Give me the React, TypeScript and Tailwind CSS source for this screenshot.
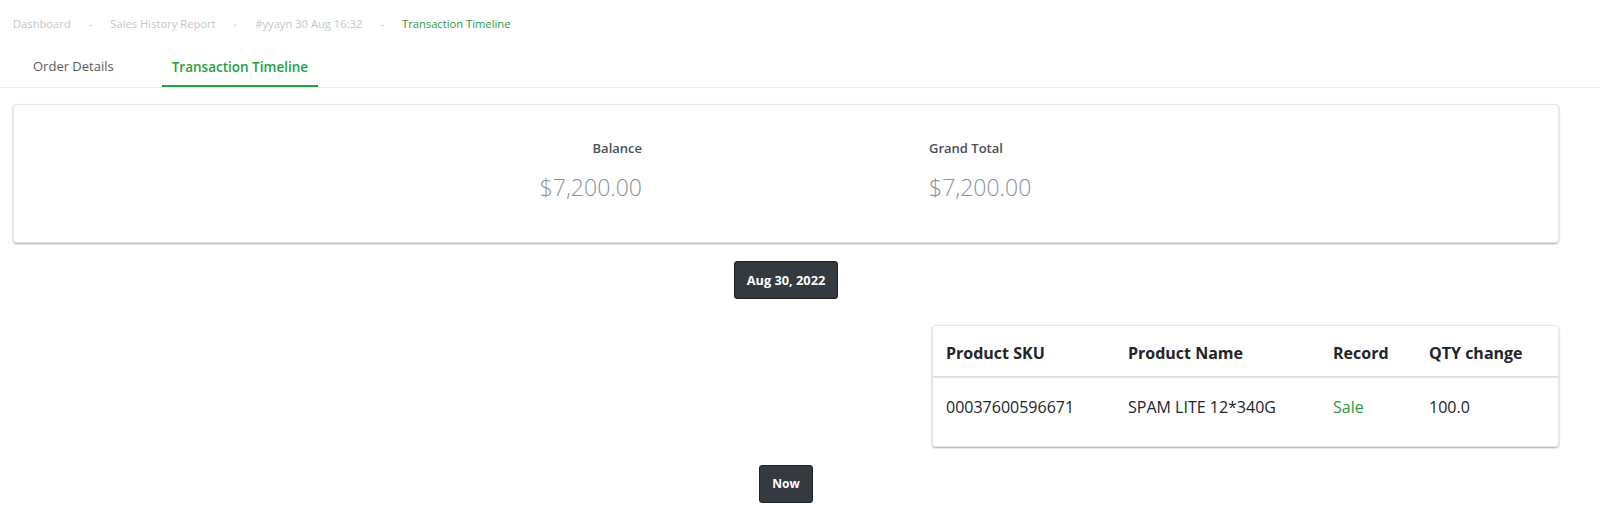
const CRUMBS = ["Dashboard", "Sales History Report", "#yyayn 30 Aug 16:32"];

export default function App() {
  return (
    <div className="min-h-[527px] bg-white text-[#212529]" style={{ fontFamily: '"Open Sans", "Noto Sans", sans-serif' }}>
      {/* breadcrumb */}
      <div className="flex items-center px-[13px] pt-[16px] text-[11.2px] leading-4">
        {CRUMBS.map((c) => (
          <span key={c} className="flex items-center text-[#c3c7cc]">
            {c}
            <span className="px-[18px]">-</span>
          </span>
        ))}
        <span className="text-[#2a9d3c]">Transaction Timeline</span>
      </div>

      {/* tabs */}
      <div className="mt-[17px] flex border-b border-[#eceeef] px-[13px]">
        <div className="px-5 pb-[10px] pt-[8px] text-[13px] text-[#555b61]">Order Details</div>
        <div className="ml-[28px] border-b-2 border-[#22a33a] px-[10px] pb-[8px] pt-[8px] text-[13.5px] font-semibold text-[#22a33a]">
          Transaction Timeline
        </div>
      </div>

      <div className="pl-[13px] pr-[41px] pt-[16px]">
        {/* summary card */}
        <div className="grid h-[139px] grid-cols-2 rounded border border-[#e4e6e9] shadow-[0_1px_2px_rgba(0,0,0,0.35)]">
          <div className="pr-[144px] pt-[34px] text-right">
            <div className="text-[13px] font-semibold text-[#495057]">Balance</div>
            <div className="mt-[11px] text-[23px] font-light text-[#8a939b]">$7,200.00</div>
          </div>
          <div className="pl-[143px] pt-[34px]">
            <div className="text-[13px] font-semibold text-[#495057]">Grand Total</div>
            <div className="mt-[11px] text-[23px] font-light text-[#8a939b]">$7,200.00</div>
          </div>
        </div>

        {/* timeline */}
        <div className="mt-[18px] flex justify-center">
          <div className="rounded-[3px] border border-[#1d2125] bg-[#343a40] px-3 py-[10px] text-[12.8px] font-bold leading-4 text-white">
            Aug 30, 2022
          </div>
        </div>

        <div className="mt-[26px] grid grid-cols-2">
          <div />
          <div className="ml-[146px] h-[122px] rounded border border-[#e4e6e9] shadow-[0_1px_2px_rgba(0,0,0,0.35)]">
            <table className="w-full text-left text-[16px]">
              <thead>
                <tr className="border-b-2 border-[#dee2e6]">
                  <th className="w-[182px] px-[13px] pb-[11px] pt-[15px] font-bold">Product SKU</th>
                  <th className="w-[205px] px-[13px] pb-[11px] pt-[15px] font-bold">Product Name</th>
                  <th className="w-[96px] px-[13px] pb-[11px] pt-[15px] font-bold">Record</th>
                  <th className="px-[13px] pb-[11px] pt-[15px] font-bold">QTY change</th>
                </tr>
              </thead>
              <tbody>
                <tr>
                  <td className="px-[13px] pb-[11px] pt-[17px]">00037600596671</td>
                  <td className="px-[13px] pb-[11px] pt-[17px]">SPAM LITE 12*340G</td>
                  <td className="px-[13px] pb-[11px] pt-[17px] text-[#2a9d3c]">Sale</td>
                  <td className="px-[13px] pb-[11px] pt-[17px]">100.0</td>
                </tr>
              </tbody>
            </table>
          </div>
        </div>

        <div className="mt-[18px] flex justify-center">
          <div className="rounded-[3px] border border-[#1d2125] bg-[#343a40] px-3 py-[10px] text-[12px] font-bold leading-4 text-white">
            Now
          </div>
        </div>
      </div>
    </div>
  );
}
